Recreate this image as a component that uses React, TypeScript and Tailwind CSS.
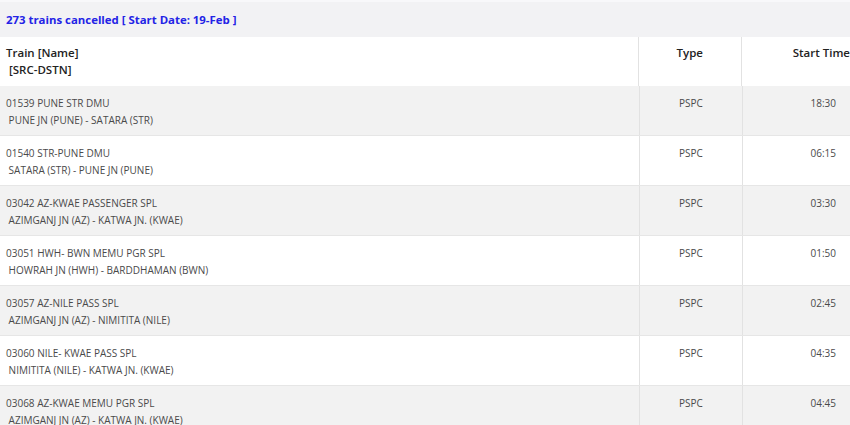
import React from "react";

const rows = [
  ["01539 PUNE STR DMU", "PUNE JN (PUNE) - SATARA (STR)", "PSPC", "18:30"],
  ["01540 STR-PUNE DMU", "SATARA (STR) - PUNE JN (PUNE)", "PSPC", "06:15"],
  ["03042 AZ-KWAE PASSENGER SPL", "AZIMGANJ JN (AZ) - KATWA JN. (KWAE)", "PSPC", "03:30"],
  ["03051 HWH- BWN MEMU PGR SPL", "HOWRAH JN (HWH) - BARDDHAMAN (BWN)", "PSPC", "01:50"],
  ["03057 AZ-NILE PASS SPL", "AZIMGANJ JN (AZ) - NIMITITA (NILE)", "PSPC", "02:45"],
  ["03060 NILE- KWAE PASS SPL", "NIMITITA (NILE) - KATWA JN. (KWAE)", "PSPC", "04:35"],
  ["03068 AZ-KWAE MEMU PGR SPL", "AZIMGANJ JN (AZ) - KATWA JN. (KWAE)", "PSPC", "04:45"],
];

export default function App() {
  return (
    <div
      className="w-[850px] h-[425px] overflow-hidden bg-white text-[#333]"
      style={{ fontFamily: "'Open Sans', 'Liberation Sans', sans-serif" }}
    >
      <div className="h-[37px] bg-[#f2f2f4] border-t-2 border-[#f8f8fa] flex items-center pl-[6px]">
        <span className="text-[11.4px] font-bold text-[#2323e6]">
          273 trains cancelled [ Start Date: 19-Feb ]
        </span>
      </div>
      <div className="flex h-[49px] bg-white text-[#222] text-[11.5px] font-semibold">
        <div className="w-[640px] border-r border-[#e2e2e2] pl-[6px] pt-[7px] leading-[17px]">
          <div>Train [Name]</div>
          <div className="whitespace-pre"> [SRC-DSTN]</div>
        </div>
        <div className="w-[103px] border-r border-[#e2e2e2] text-center pt-[7px] leading-[17px]">Type</div>
        <div className="flex-1 pl-[51px] pt-[7px] leading-[17px] whitespace-nowrap">Start Time</div>
      </div>
      {rows.map((r, i) => (
        <div
          key={i}
          className={`flex h-[50px] border-b border-[#e6e6e6] text-[10px] text-[#4a4a4a] ${i % 2 === 0 ? "bg-[#f2f2f2]" : "bg-white"}`}
        >
          <div className="w-[640px] border-r border-[#e2e2e2] pl-[6px] pt-[9px] leading-[17px]">
            <div>{r[0]}</div>
            <div className="whitespace-pre"> {r[1]}</div>
          </div>
          <div className="w-[103px] border-r border-[#e2e2e2] text-center pt-[9px] leading-[17px]">{r[2]}</div>
          <div className="flex-1 text-right pr-[14px] pt-[9px] leading-[17px]">{r[3]}</div>
        </div>
      ))}
    </div>
  );
}
